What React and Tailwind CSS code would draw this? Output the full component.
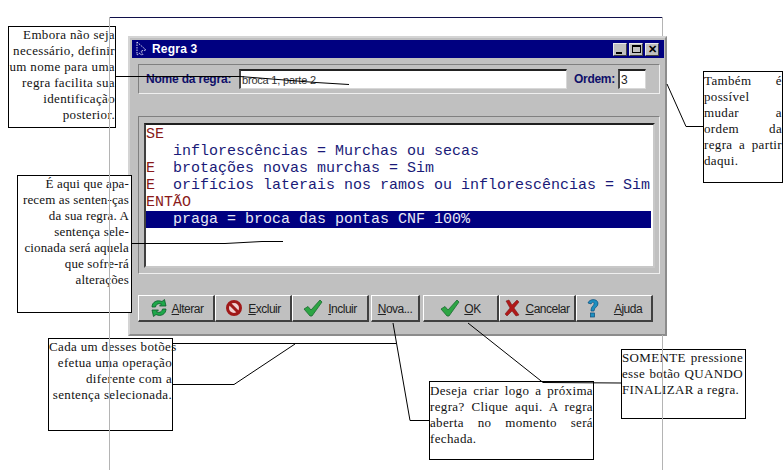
import React from "react";

const RefreshIcon = () => (
  <svg width="20" height="20" viewBox="0 0 20 20" className="shrink-0">
    <path d="M3 9 C3 4 8 1.500 13 3.500 L15.500 1.500 L17 8 L10.500 8 L12.500 6 C9 5 7 6.500 6.500 9 Z" fill="#1fa84a" stroke="#0a5a2a" strokeWidth="0.8" />
    <path d="M17 11 C17 16 12 19 7 16.500 L4.500 18.500 L3 12 L9.500 12 L7.500 14 C11 15 13 13.500 13.500 11 Z" fill="#1fa84a" stroke="#0a5a2a" strokeWidth="0.8" />
  </svg>
);

const NoIcon = () => (
  <svg width="18" height="18" viewBox="0 0 18 18" className="shrink-0">
    <circle cx="9" cy="9" r="6.500" fill="#f0d0d0" stroke="#a01818" strokeWidth="3" />
    <path d="M4.500 4.500 L13.500 13.500" stroke="#a01818" strokeWidth="3" />
  </svg>
);

const CheckIcon = ({ w = 20 }) => (
  <svg width={w} height="20" viewBox="0 0 20 20" className="shrink-0">
    <path d="M1 11 L5 8.500 L8 12 L17 2 L19 4 L9 18 L7 18 Z" fill="#2da544" stroke="#1a6b30" strokeWidth="0.8" />
  </svg>
);

const CrossIcon = () => (
  <svg width="16" height="18" viewBox="0 0 16 18" className="shrink-0">
    <path d="M2 2 L5 1 L8 6 L13 1 L15 3 L10 9 L15 16 L12 17 L8 12 L3 17 L1 15 L6 9 Z" fill="#b01818" stroke="#701010" strokeWidth="0.5" />
  </svg>
);

const HelpIcon = () => (
  <svg width="14" height="20" viewBox="0 0 14 20" className="shrink-0">
    <path d="M2 5 C3 1 11 0 12 5 C12.500 9 8 9 8 13 L5 13 C5 8 8 8 8 5.500 C8 3.500 6 4 5 6 Z" fill="#1d8fc0" stroke="#0a4a7a" strokeWidth="0.7" />
    <rect x="4.500" y="15" width="4" height="4" fill="#1d8fc0" stroke="#0a4a7a" strokeWidth="0.7" />
  </svg>
);

const TitleIcon = () => (
  <svg width="12" height="16" viewBox="0 0 12 16" className="shrink-0">
    <path d="M2 1 L2 14 L5 12 L7 15 M2 1 L11 9 L6 10 L8 14" fill="none" stroke="#d8d8f0" strokeWidth="1" strokeDasharray="1.500 1" />
  </svg>
);

const WinButton = ({ children }) => (
  <div className="w-[14px] h-[13px] bg-[#c0c0c0] border-t border-l border-t-[#e8e8e8] border-l-[#e8e8e8] border-r border-b border-r-[#404040] border-b-[#404040] flex items-center justify-center text-black">
    {children}
  </div>
);

const ToolButton = ({ icon, letter, rest, className, gap }) => (
  <div className={`h-[27px] bg-[#c0c0c0] border-t border-l border-t-white border-l-white border-r-2 border-b-2 border-r-[#404040] border-b-[#404040] flex items-center justify-center text-[12px] tracking-[-0.5px] text-[#222] ${className}`}>
    {icon}
    <span className={`pt-px ${gap}`}>
      <span className="underline">{letter}</span>
      {rest}
    </span>
  </div>
);

const memoLines = [
  { key: "SE", text: "" },
  { key: "", text: "inflorescências = Murchas ou secas" },
  { key: "E", text: "brotações novas murchas = Sim" },
  { key: "E", text: "orifícios laterais nos ramos ou inflorescências = Sim" },
  { key: "ENTÃO", text: "" },
  { key: "", text: "praga = broca das pontas CNF 100%", selected: true },
];

const Dialog = () => (
  <div className="absolute left-[128px] top-[36px] z-10 w-[539px] h-[300px] bg-[#c0c0c0] border-t-2 border-l-2 border-t-[#d4d4d4] border-l-[#d4d4d4] border-r-2 border-b-2 border-r-[#8c8c8c] border-b-[#8c8c8c] pt-[2px] pl-[2px] pr-[1px] font-['Liberation_Sans',sans-serif]">
    <div className="h-[18px] bg-[#000080] flex items-center pl-[3px] pr-[5px] text-white">
      <TitleIcon />
      <span className="ml-[5px] text-[12px] font-bold tracking-[0.2px]">Regra 3</span>
      <div className="ml-auto flex items-center gap-[2px]">
        <WinButton>
          <div className="w-[6px] h-[2px] bg-black mt-[7px] mr-[2px]" />
        </WinButton>
        <WinButton>
          <div className="w-[9px] h-[8px] border border-black border-t-2" />
        </WinButton>
        <WinButton>
          <span className="text-[11px] font-bold leading-none">✕</span>
        </WinButton>
      </div>
    </div>

    <div className="ml-[6px] mr-[4px] mt-[6px] h-[30px] border-t border-l border-t-[#808080] border-l-[#808080] border-r border-b border-r-[#efefef] border-b-[#efefef] flex items-center pl-[7px]">
      <span className="w-[93px] text-[12px] font-bold text-[#10106a] tracking-[-0.2px]">Nome da regra:</span>
      <div className="w-[328px] h-[20px] bg-white border-t-2 border-l-2 border-t-[#222] border-l-[#444] border-r border-b border-r-[#d8d8d8] border-b-[#d8d8d8] text-[11px] leading-[18px] pl-px tracking-[-0.2px] text-[#333]">
        broca 1, parte 2
      </div>
      <span className="ml-[7px] w-[44px] text-[12px] font-bold text-[#10106a] tracking-[-0.3px]">Ordem:</span>
      <div className="w-[28px] h-[20px] bg-white border-t-2 border-l-2 border-t-[#222] border-l-[#444] border-r border-b border-r-[#d8d8d8] border-b-[#d8d8d8] text-[12px] leading-[18px] pl-px text-[#222]">
        3
      </div>
    </div>

    <div className="ml-[6px] mr-[4px] mt-[22px] h-[158px] border-t border-l border-t-[#808080] border-l-[#808080] border-r border-b border-r-[#efefef] border-b-[#efefef] pt-[6px] pl-[5px] pr-[4px]">
      <div className="h-[145px] bg-white border-t-2 border-l-2 border-t-[#202020] border-l-[#404040] border-r-2 border-b-2 border-r-[#c8c8c8] border-b-[#c8c8c8] pt-px font-['Liberation_Mono',monospace] text-[15px] leading-[17px] whitespace-pre">
        {memoLines.map((line, index) => (
          <div
            key={index}
            className={line.selected ? "h-[17px] bg-[#000080] text-[#e8e8f4] mr-[2px]" : "h-[17px] text-[#1a1a78]"}
          >
            {line.key === "SE" || line.key === "ENTÃO" ? (
              <span className="text-[#8a1a1a]">{line.key}</span>
            ) : (
              <>
                <span className="inline-block w-[27px] text-[#8a1a1a]">{line.key}</span>
                {line.text}
              </>
            )}
          </div>
        ))}
      </div>
    </div>

    <div className="ml-[6px] mt-[21px] flex items-start">
      <ToolButton className="w-[77px]" gap="ml-[3px]" icon={<RefreshIcon />} letter="A" rest="lterar" />
      <ToolButton className="w-[77px]" gap="ml-[5px]" icon={<NoIcon />} letter="E" rest="xcluir" />
      <ToolButton className="w-[77px]" gap="ml-[5px]" icon={<CheckIcon />} letter="I" rest="ncluir" />
      <ToolButton className="w-[49px] ml-[2px]" letter="N" rest="ova..." />
      <ToolButton className="w-[76px] ml-[3px]" gap="ml-[4px]" icon={<CheckIcon />} letter="O" rest="K" />
      <ToolButton className="w-[77px]" gap="ml-[5px]" icon={<CrossIcon />} letter="C" rest="ancelar" />
      <ToolButton className="w-[77px]" gap="ml-[14px]" icon={<HelpIcon />} letter="A" rest="juda" />
    </div>
  </div>
);

// one div per line, the breaks are the ones in the screenshot
const Callout = ({ className, lines, align }) => (
  <div className={`absolute z-20 bg-white border border-black font-['Liberation_Serif',serif] text-[13px] leading-[16px] text-[#111] ${className}`}>
    {lines.map((line, index) => (
      <div
        key={index}
        className={
          align === "right"
            ? "text-right whitespace-nowrap"
            : line.justify
              ? "whitespace-nowrap [text-align-last:justify]"
              : "whitespace-nowrap"
        }
      >
        {line.text || line}
      </div>
    ))}
  </div>
);

const Connectors = () => (
  <svg width="783" height="474" className="absolute left-0 top-0 z-30 pointer-events-none">
    <g fill="none" stroke="#000" strokeWidth="1">
      <polyline points="115,76.500 240,76.500 316,82.500 349,84.500" />
      <polyline points="131,243.500 225,243.500 262,241.500 283,241.500" />
      <polyline points="172,343.500 396,343.500" />
      <polyline points="172,384.500 234,384.500 295,344" />
      <polyline points="393,323 410,420.500 429,420.500" />
      <polyline points="468,323 543,382.500 621,383" />
      <polyline points="667,84 686,126.500 704,126.500" />
    </g>
  </svg>
);

export default function App() {
  return (
    <div className="relative w-[783px] h-[474px] bg-white overflow-hidden">
      <div className="absolute left-[109px] top-[17px] z-30 w-[553px] h-px bg-[#10104a]" />
      <div className="absolute left-[109px] top-[17px] z-30 w-px h-[453px] bg-[#b4b4b4]" />
      <div className="absolute left-[662px] top-[17px] w-px h-[453px] bg-[#b4b4b4]" />
      <div className="absolute left-[662px] top-[335px] z-30 w-px h-[135px] bg-[#b4b4b4]" />

      <Dialog />

      <Callout
        className="left-[8px] top-[26px] w-[108px] h-[102px] tracking-[0.35px]"
        align="right"
        lines={["Embora não seja", "necessário, definir", "um nome para uma", "regra facilita sua", "identificação", "posterior."]}
      />
      <Callout
        className="left-[17px] top-[175px] w-[115px] h-[138px] pr-[2px] tracking-[0.15px]"
        align="right"
        lines={["É aqui que apa-", "recem as senten-ças", "da sua regra. A", "sentença sele-", "cionada será aquela", "que sofre-rá", "alterações"]}
      />
      <Callout
        className="left-[48px] top-[338px] w-[125px] h-[93px] tracking-[0.35px]"
        align="right"
        lines={["Cada um desses botões", "efetua uma operação", "diferente com a", "sentença selecionada."]}
      />
      <Callout
        className="left-[703px] top-[71px] w-[80px] h-[112px] pt-px tracking-[0.35px]"
        lines={[
          { text: "Também é", justify: true },
          { text: "possível" },
          { text: "mudar a", justify: true },
          { text: "ordem da", justify: true },
          { text: "regra a partir", justify: true },
          { text: "daqui." },
        ]}
      />
      <Callout
        className="left-[429px] top-[381px] w-[165px] h-[79px] pt-px tracking-[0.35px]"
        lines={[
          { text: "Deseja criar logo a próxima", justify: true },
          { text: "regra? Clique aqui. A regra", justify: true },
          { text: "aberta no momento será", justify: true },
          { text: "fechada." },
        ]}
      />
      <Callout
        className="left-[621px] top-[349px] w-[125px] h-[70px] pr-[2px] tracking-[0.35px]"
        lines={[
          { text: "SOMENTE pressione", justify: true },
          { text: "esse botão QUANDO", justify: true },
          { text: "FINALIZAR a regra." },
        ]}
      />

      <Connectors />
    </div>
  );
}
